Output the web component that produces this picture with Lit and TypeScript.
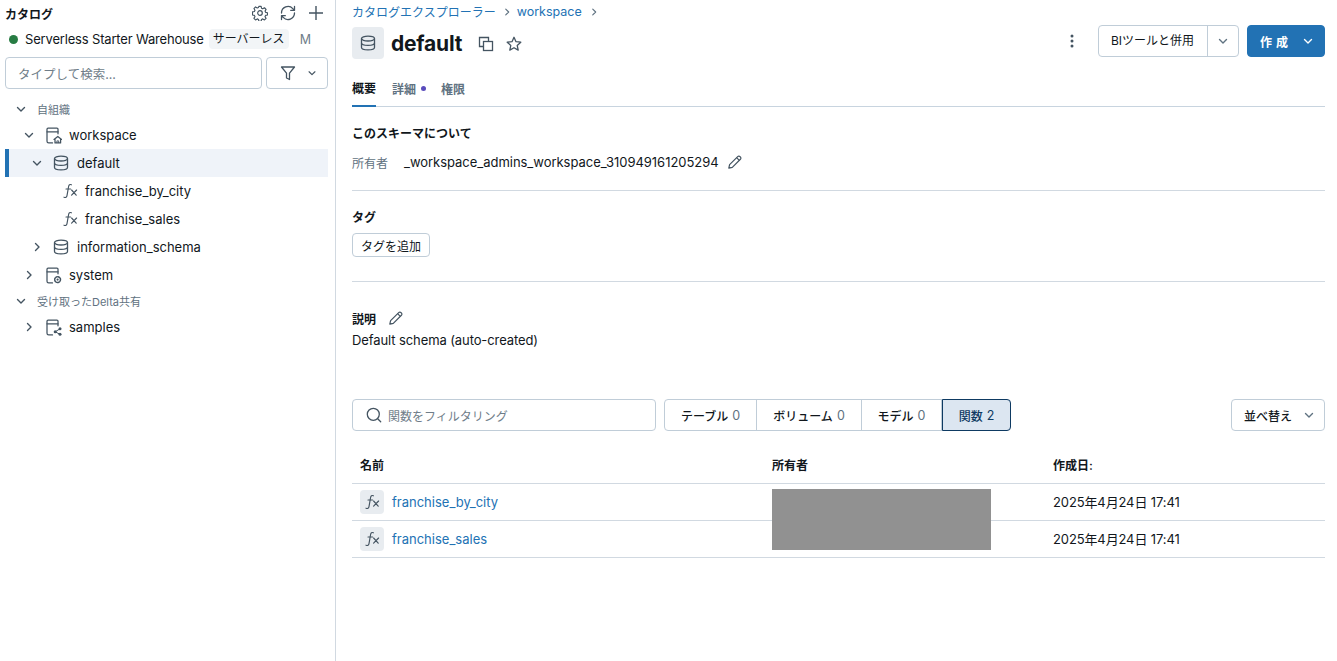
import { LitElement, html, css, svg } from "lit";
import { customElement } from "lit/decorators.js";

const chevDown = (s = 12) => html`<svg class="ic" width=${s} height=${s} viewBox="0 0 12 12" fill="none" stroke="currentColor" stroke-width="1.4" stroke-linecap="round" stroke-linejoin="round"><path d="M2.5 4.5 6 8l3.5-3.5"/></svg>`;
const chevRight = (s = 12) => html`<svg class="ic" width=${s} height=${s} viewBox="0 0 12 12" fill="none" stroke="currentColor" stroke-width="1.4" stroke-linecap="round" stroke-linejoin="round"><path d="M4.5 2.5 8 6l-3.500 3.500"/></svg>`;
const db = (s = 16) => html`<svg class="ic" width=${s} height=${s} viewBox="0 0 16 16" fill="none" stroke="currentColor" stroke-width="1.3"><ellipse cx="8" cy="3.6" rx="6.500" ry="2.4"/><path d="M1.500 3.6v8.800C1.500 13.700 4.500 14.800 8 14.800s6.500-1.100 6.500-2.400V3.600"/><path d="M1.500 8c0 1.300 3 2.400 6.500 2.400s6.500-1.100 6.500-2.400"/></svg>`;
const fx = (s = 16) => html`<svg class="ic" width=${s} height=${s} viewBox="0 0 16 16" fill="none" stroke="currentColor" stroke-width="1.15" stroke-linecap="round"><path d="M9.400 1.800C7.800 1 6.900 1.900 6.600 3.500L5 12.600C4.700 14.300 3.700 14.900 2 14.200"/><path d="M4 6h4.600"/><path d="M9.600 7l4.600 5.200M14.600 7l-5 5.200"/></svg>`;
const catalog = (badge: unknown) => html`<svg class="ic" width="16" height="17" viewBox="0 0 16 17" fill="none" stroke="currentColor" stroke-width="1.25" stroke-linecap="round" stroke-linejoin="round"><path d="M6.500 15.900H2.700A1.700 1.700 0 0 1 1 14.200V2.200C1 1.500 1.500 1 2.100 1h8.800c.6 0 1.100.5 1.100 1.100v4.700"/><path d="M1 4.800h11"/>${badge}</svg>`;
const home = svg`<path d="M8 12.400l3.800-3 3.800 3M9 11.800v4.100h5.600v-4.100"/><path d="M10.900 15.700v-1.800h1.800v1.800" stroke-width=".9"/>`;
const cog = svg`<circle cx="11.600" cy="12.600" r="1.100" fill="currentColor" stroke="none"/><circle cx="11.600" cy="12.600" r="2.900" stroke-width="1.500" stroke-dasharray="1.400 .9"/>`;
const share = svg`<circle cx="14" cy="9.800" r="1.500" fill="currentColor" stroke="none"/><circle cx="9.200" cy="12.800" r="1.500" fill="currentColor" stroke="none"/><circle cx="14" cy="15.300" r="1.500" fill="currentColor" stroke="none"/><path d="M14 9.800l-4.800 3 4.800 2.500" stroke-width="1"/>`;
const pencil = html`<svg class="ic" width="16" height="16" viewBox="0 0 16 16" fill="none" stroke="currentColor" stroke-width="1.2" stroke-linejoin="round"><path d="M1.800 14.200l.8-3.500 8.100-8.100a1.600 1.600 0 0 1 2.300 0l.4.4a1.600 1.600 0 0 1 0 2.300l-8.100 8.100z"/><path d="M9.600 3.700l2.700 2.700"/></svg>`;

@customElement("app-root")
export class AppRoot extends LitElement {
  static styles = css`
    :host { display: flex; width: 1337px; height: 661px; background: #fff; overflow: hidden;
      font-family: Inter, "Noto Sans CJK JP", sans-serif; font-size: 13px; color: #11171c; box-sizing: border-box; }
    * { box-sizing: border-box; }
    .ic { display: block; flex: none; }
    .side { width: 336px; flex: none; border-right: 1px solid #d1d9e1; height: 100%; padding: 0 7px 0 5px; }
    .side-head { height: 26px; display: flex; align-items: center; }
    .side-title { font-size: 12px; font-weight: 600; flex: 1; }
    .side-icons { display: flex; gap: 12px; color: #445461; margin-right: 4px; }
    .wh { height: 26px; display: flex; align-items: center; padding-left: 4px; white-space: nowrap; }
    .wh .n { letter-spacing: -.17px; }
    .dot { width: 9px; height: 9px; border-radius: 50%; background: #277c43; margin-right: 7px; flex: none; }
    .pill { background: #f2f5f7; border-radius: 4px; padding: 0 4px; margin-left: 5px; height: 20px; line-height: 20px; font-size: 12px; }
    .m { color: #6f7d89; margin-left: 11px; font-size: 12.5px; }
    .search { display: flex; gap: 4px; margin-top: 5px; }
    .input { height: 32px; border: 1px solid #c0cdd8; border-radius: 4px; display: flex; align-items: center; color: #6f7d89; }
    .search .input { width: 257px; padding-left: 12px; font-size: 12.5px; }
    .fbtn { width: 62px; height: 32px; border: 1px solid #c0cdd8; border-radius: 4px; display: flex; align-items: center; gap: 11px; padding-left: 13px; color: #445461; }
    .fbtn .ic:last-child { width: 10px; height: 10px; }
    .tree { margin-top: 8px; }
    .sec { height: 24px; display: flex; align-items: center; padding-left: 10px; font-size: 11px; color: #5f7281; gap: 10px; }
    .sec .ic { color: #445461; }
    .row { height: 28px; display: flex; align-items: center; }
    .row .tw { width: 12px; color: #445461; margin-right: 11px; }
    .row .ico { color: #445461; margin-right: 7px; }
    .l1 { padding-left: 18px; }
    .l2 { padding-left: 26px; }
    .l2 .tw { margin-right: 10px; }
    .l2 .ico { margin-right: 8px; }
    .l3 { padding-left: 57px; }
    .l3 .ico { margin-right: 7px; }
    .sel { background: #eff3f9; border-left: 4px solid #2272b4; padding-left: 22px; }
    .main { flex: 1; min-width: 0; padding: 0 12px 0 16px; position: relative; }
    .crumb { height: 23px; display: flex; align-items: center; color: #2272b4; gap: 5px; white-space: nowrap; font-size: 12.5px; }
    .crumb .ic { color: #5f7281; margin: 0 0 0 1px; }
    .crumb .jp { font-size: 12px; }
    .crumb .w { margin: 0 1px 0 0; }
    .title { height: 32px; margin-top: 4px; display: flex; align-items: center; }
    .ticon { width: 32px; height: 32px; background: #e8ecf0; border-radius: 4px; display: flex; align-items: center; justify-content: center; color: #445461; margin-right: 7px; }
    h1 { font-size: 21px; font-weight: 700; margin: 2px 0 0; letter-spacing: -.2px; line-height: 30px; }
    .tact { display: flex; gap: 12px; margin-left: 16px; margin-top: 2px; color: #445461; }
    .spacer { flex: 1; }
    .acts { display: flex; align-items: center; margin-bottom: 4px; }
    .kebab { color: #445461; margin-right: 24px; }
    .btn { height: 32px; border: 1px solid #c0cdd8; border-radius: 4px; display: flex; align-items: center; background: #fff; white-space: nowrap; }
    .bi { width: 141px; }
    .bi span { width: 109px; padding-left: 12px; font-size: 12px; border-right: 1px solid #c0cdd8; height: 30px; line-height: 30px; }
    .bi .ic { margin-left: 9px; color: #5f7281; }
    .create { width: 78px; margin-left: 8px; background: #2272b4; border-color: #2272b4; color: #fff; padding-left: 12px; font-size: 12px; font-weight: 600; letter-spacing: 4px; gap: 10px; }
    .tabs { display: flex; gap: 16px; height: 35px; margin-top: 13px; border-bottom: 1px solid #c8d4df; align-items: stretch; font-size: 12px; color: #5f7281; }
    .tab { display: flex; align-items: center; height: 35px; padding-bottom: 3px; font-weight: 600; }
    .tab.on { color: #11171c; border-bottom: 2px solid #2272b4; }
    .tab i { width: 5px; height: 5px; border-radius: 50%; background: #5a4cbc; margin: 0 -1px 0 5px; }
    .h { font-size: 12px; font-weight: 600; }
    .about { height: 84px; padding-top: 18px; border-bottom: 1px solid #d1d9e1; }
    .about .h { height: 18px; line-height: 18px; }
    .owner { display: flex; align-items: center; margin-top: 10px; height: 18px; }
    .owner .k { color: #5f7281; width: 52px; font-size: 12px; }
    .owner .v { letter-spacing: -.03px; }
    .owner .ic { margin-left: 8px; color: #445461; }
    .tags { height: 91px; padding-top: 18px; border-bottom: 1px solid #d1d9e1; }
    .tags .h { height: 18px; line-height: 18px; }
    .tagbtn { display: inline-flex; height: 24px; align-items: center; padding: 0 8px; border: 1px solid #c0cdd8; border-radius: 4px; margin-top: 6px; font-size: 12px; vertical-align: top; }
    .desc { height: 117px; padding-top: 27px; }
    .desc .t { display: flex; align-items: center; gap: 12px; height: 18px; }
    .desc .t .ic { color: #445461; }
    .desc p { margin: 4px 0 0; height: 18px; line-height: 18px; letter-spacing: -.1px; }
    .filters { display: flex; height: 32px; align-items: stretch; }
    .filters .input { width: 304px; padding-left: 13px; gap: 6px; font-size: 12px; }
    .filters .input .ic { color: #445461; }
    .seg { display: flex; margin-left: 8px; border: 1px solid #c0cdd8; border-radius: 4px; width: 347px; }
    .seg div { display: flex; align-items: center; justify-content: center; font-size: 12px; font-weight: 500; border-right: 1px solid #c0cdd8; gap: 4px; }
    .seg div b { font-weight: 400; color: #5f7281; font-size: 12.5px; }
    .seg div:nth-child(1) { width: 92px; }
    .seg div:nth-child(2) { width: 105px; }
    .seg div:nth-child(3) { width: 80px; }
    .seg .on { flex: 1; margin: -1px -1px -1px 0; background: #dce6f1; border: 1px solid #0e3a62; border-radius: 0 4px 4px 0; color: #0e3a62; }
    .seg .on b { color: #0e3a62; }
    .sort { margin-left: auto; width: 94px; padding-left: 12px; font-size: 12px; gap: 11px; font-weight: 500; }
    .sort .ic { color: #5f7281; }
    .tbl { position: relative; margin-top: 16px; }
    .tr { display: grid; grid-template-columns: 420px 273px 1fr; border-bottom: 1px solid #d1d9e1; height: 37px; align-items: center; }
    .tr > div { padding-left: 8px; white-space: nowrap; }
    .tr > .own { padding-left: 0; }
    .tr .dt { letter-spacing: -.12px; margin-top: -2px; }
    .th { font-size: 12px; font-weight: 600; }
    .th > div { margin-top: -2px; }
    .tr .name { display: flex; align-items: center; color: #2272b4; gap: 8px; }
    .fxb { width: 24px; height: 24px; background: #e8ecf0; border-radius: 4px; display: flex; align-items: center; justify-content: center; color: #445461; }
    .redact { position: absolute; left: 420px; top: 42px; width: 219px; height: 61px; background: #919191; }
  `;

  private item(cls: string, twisty: unknown, icon: unknown, label: string) {
    return html`<div class="row ${cls}">${twisty ? html`<span class="tw">${twisty}</span>` : ""}<span class="ico">${icon}</span><span>${label}</span></div>`;
  }

  render() {
    return html`
      <aside class="side">
        <div class="side-head">
          <span class="side-title">カタログ</span>
          <div class="side-icons">
            <svg class="ic" width="16" height="16" viewBox="0 0 16 16" fill="none" stroke="currentColor" stroke-width="1.2" stroke-linejoin="round"><circle cx="8" cy="8" r="2.300"/><path d="M6.800 1h2.400l.4 2 1.300.6 1.800-1.100 1.700 1.700-1.100 1.800.6 1.300 2 .4v2.400l-2 .4-.6 1.300 1.100 1.800-1.700 1.700-1.800-1.100-1.300.6-.4 2H6.800l-.4-2-1.300-.6-1.800 1.100-1.700-1.700 1.100-1.800-.6-1.300-2-.4V6.800l2-.4.6-1.300-1.100-1.800 1.700-1.700 1.800 1.100 1.300-.6z" transform="translate(.4 .4) scale(.95)"/></svg>
            <svg class="ic" width="16" height="16" viewBox="0 0 16 16" fill="none" stroke="currentColor" stroke-width="1.3" stroke-linecap="round" stroke-linejoin="round"><path d="M1.500 8A6.500 6.500 0 0 1 12.800 3.600L14.500 5.300M14.500 1.500v3.800h-3.800"/><path d="M14.500 8A6.500 6.500 0 0 1 3.200 12.400L1.500 10.700M1.500 14.500v-3.800h3.800"/></svg>
            <svg class="ic" width="16" height="16" viewBox="0 0 16 16" fill="none" stroke="currentColor" stroke-width="1.400"><path d="M8 1v14M1 8h14"/></svg>
          </div>
        </div>
        <div class="wh"><span class="dot"></span><span class="n">Serverless Starter Warehouse</span><span class="pill">サーバーレス</span><span class="m">M</span></div>
        <div class="search">
          <div class="input">タイプして検索...</div>
          <div class="fbtn">
            <svg class="ic" width="16" height="16" viewBox="0 0 16 16" fill="none" stroke="currentColor" stroke-width="1.300" stroke-linejoin="round"><path d="M1.500 2h13L9.500 8.200V14.500L6.500 13V8.200z"/></svg>
            ${chevDown(12)}
          </div>
        </div>
        <div class="tree">
          <div class="sec">${chevDown(12)}<span>自組織</span></div>
          ${this.item("l1", chevDown(12), catalog(home), "workspace")}
          ${this.item("l2 sel", chevDown(12), db(), "default")}
          ${this.item("l3", null, fx(), "franchise_by_city")}
          ${this.item("l3", null, fx(), "franchise_sales")}
          ${this.item("l2", chevRight(12), db(), "information_schema")}
          ${this.item("l1", chevRight(12), catalog(cog), "system")}
          <div class="sec">${chevDown(12)}<span>受け取ったDelta共有</span></div>
          ${this.item("l1", chevRight(12), catalog(share), "samples")}
        </div>
      </aside>
      <main class="main">
        <div class="crumb"><span class="jp">カタログエクスプローラー</span>${chevRight(10)}<span class="w">workspace</span>${chevRight(10)}</div>
        <div class="title">
          <div class="ticon">${db(16)}</div>
          <h1>default</h1>
          <div class="tact">
            <svg class="ic" width="16" height="16" viewBox="0 0 16 16" fill="none" stroke="currentColor" stroke-width="1.300"><path d="M5.500 10.500H1.500v-9h9v4"/><rect x="5.500" y="5.500" width="9" height="9"/></svg>
            <svg class="ic" width="16" height="16" viewBox="0 0 16 16" fill="none" stroke="currentColor" stroke-width="1.300" stroke-linejoin="round"><path d="M8 1.300l2 4.400 4.800.5-3.600 3.200 1 4.700L8 11.700l-4.200 2.400 1-4.700L1.200 6.200 6 5.700z"/></svg>
          </div>
          <div class="spacer"></div>
          <div class="acts">
            <svg class="ic kebab" width="4" height="16" viewBox="0 0 4 16" fill="currentColor"><circle cx="2" cy="3" r="1.500"/><circle cx="2" cy="8" r="1.500"/><circle cx="2" cy="13" r="1.500"/></svg>
            <div class="btn bi"><span>BIツールと併用</span>${chevDown(12)}</div>
            <div class="btn create">作成${chevDown(12)}</div>
          </div>
        </div>
        <div class="tabs">
          <div class="tab on">概要</div>
          <div class="tab">詳細<i></i></div>
          <div class="tab">権限</div>
        </div>
        <section class="about">
          <div class="h">このスキーマについて</div>
          <div class="owner"><span class="k">所有者</span><span class="v">_workspace_admins_workspace_310949161205294</span>${pencil}</div>
        </section>
        <section class="tags">
          <div class="h">タグ</div>
          <div class="tagbtn">タグを追加</div>
        </section>
        <section class="desc">
          <div class="t"><span class="h">説明</span>${pencil}</div>
          <p>Default schema (auto-created)</p>
        </section>
        <div class="filters">
          <div class="input">
            <svg class="ic" width="16" height="16" viewBox="0 0 16 16" fill="none" stroke="currentColor" stroke-width="1.300" stroke-linecap="round"><circle cx="7.300" cy="7.300" r="6"/><path d="M11.700 11.700l3 3"/></svg>
            <span>関数をフィルタリング</span>
          </div>
          <div class="seg">
            <div>テーブル <b>0</b></div>
            <div>ボリューム <b>0</b></div>
            <div>モデル <b>0</b></div>
            <div class="on">関数 <b>2</b></div>
          </div>
          <div class="btn sort">並べ替え${chevDown(12)}</div>
        </div>
        <div class="tbl">
          <div class="tr th"><div>名前</div><div class="own">所有者</div><div>作成日:</div></div>
          <div class="tr"><div class="name"><span class="fxb">${fx(16)}</span>franchise_by_city</div><div></div><div class="dt">2025年4月24日 17:41</div></div>
          <div class="tr"><div class="name"><span class="fxb">${fx(16)}</span>franchise_sales</div><div></div><div class="dt">2025年4月24日 17:41</div></div>
          <div class="redact"></div>
        </div>
      </main>
    `;
  }
}
